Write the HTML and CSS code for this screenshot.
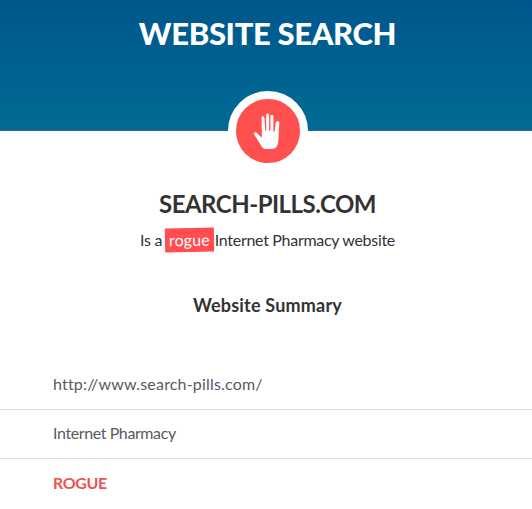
FILE: index.html
```html
<!DOCTYPE html>
<html lang="en">
<head>
    <meta charset="UTF-8">
    <meta name="viewport" content="width=device-width, initial-scale=1.0">
    <title>Website Search</title>
    <link rel="stylesheet" href="styles.css">
</head>
<body>
    <header class="banner">
        <h1>WEBSITE SEARCH</h1>
    </header>

    <main>
        <div class="status-icon">
            <svg viewBox="0 0 82 112" width="27" height="37">
                <path d="M26 16 Q26 10 30 10 Q35 10 35 16 L37 54 H40 V6 Q40 1 44.500 1 Q49 1 49 6 V54 H53 V11 Q53 5 57.500 5 Q62 5 62 11 V56 H66 L69 29 Q70 24 75 24 Q80 24 80 30 L77 84 Q76 108 58 109 H38 Q29 109 24 98 L3 64 Q1 60 4 59 Q9 57 14 63 L27 75 Z"/>
            </svg>
        </div>

        <section class="result">
            <h2>SEARCH-PILLS.COM</h2>
            <p class="verdict"><span>Is a</span> <span class="tag">rogue</span><span>Internet Pharmacy website</span></p>
            <h3>Website Summary</h3>
        </section>

        <ul class="summary">
            <li class="url">http://www.search-pills.com/</li>
            <li class="type">Internet Pharmacy</li>
            <li class="rogue">ROGUE</li>
        </ul>
    </main>
</body>
</html>
```

FILE: styles.css
```css
* {
    margin: 0;
    padding: 0;
    box-sizing: border-box;
}

body {
    background: #fff;
    color: #333;
    font-family: Lato, 'Open Sans', sans-serif;
    font-size: 16px;
}

/* Header */
.banner {
    height: 131px;
    padding: 13px 0 0 3px;
    background: linear-gradient(#00568c, #006b94);
    border-bottom: 1px solid #2b6a82;
    color: #fff;
    text-align: center;
}

.banner h1 {
    font-size: 31px;
    line-height: 40px;
    font-weight: 900;
    letter-spacing: -0.35px;
}

/* Status badge */
.status-icon {
    display: flex;
    align-items: center;
    justify-content: center;
    width: 80px;
    height: 80px;
    margin: -40px 0 0 228px;
    padding-right: 3px;
    background: #ff5050;
    border: 8px solid #fff;
    border-radius: 50%;
}

.status-icon svg {
    fill: #fff;
}

/* Result */
.result {
    padding-left: 3px;
    text-align: center;
}

.result h2 {
    margin-top: 18px;
    font-size: 24px;
    line-height: 30px;
    font-weight: 700;
    letter-spacing: -0.5px;
}

.verdict {
    display: flex;
    justify-content: center;
    margin-top: 9px;
    font-size: 16px;
    line-height: 24px;
    letter-spacing: -0.3px;
}

.tag {
    margin: 0 1px 0 3px;
    padding: 0 4px;
    background: #ff4d52;
    color: #fff;
    letter-spacing: 0.1px;
    transform: rotate(-1deg);
}

.result h3 {
    margin-top: 41px;
    font-size: 18px;
    line-height: 24px;
    font-weight: 700;
    letter-spacing: 0.2px;
}

/* Summary list */
.summary {
    margin-top: 44px;
    list-style: none;
    color: #5a5a5c;
}

.summary li {
    height: 49px;
    padding-left: 53px;
    border-bottom: 1px solid #dcdcdc;
    font-size: 16px;
    line-height: 46px;
    letter-spacing: -0.4px;
}

.summary .url {
    letter-spacing: 0.18px;
}

.summary .rogue {
    padding-top: 1px;
    border-bottom: none;
    color: #f05254;
    font-weight: 700;
}
```
